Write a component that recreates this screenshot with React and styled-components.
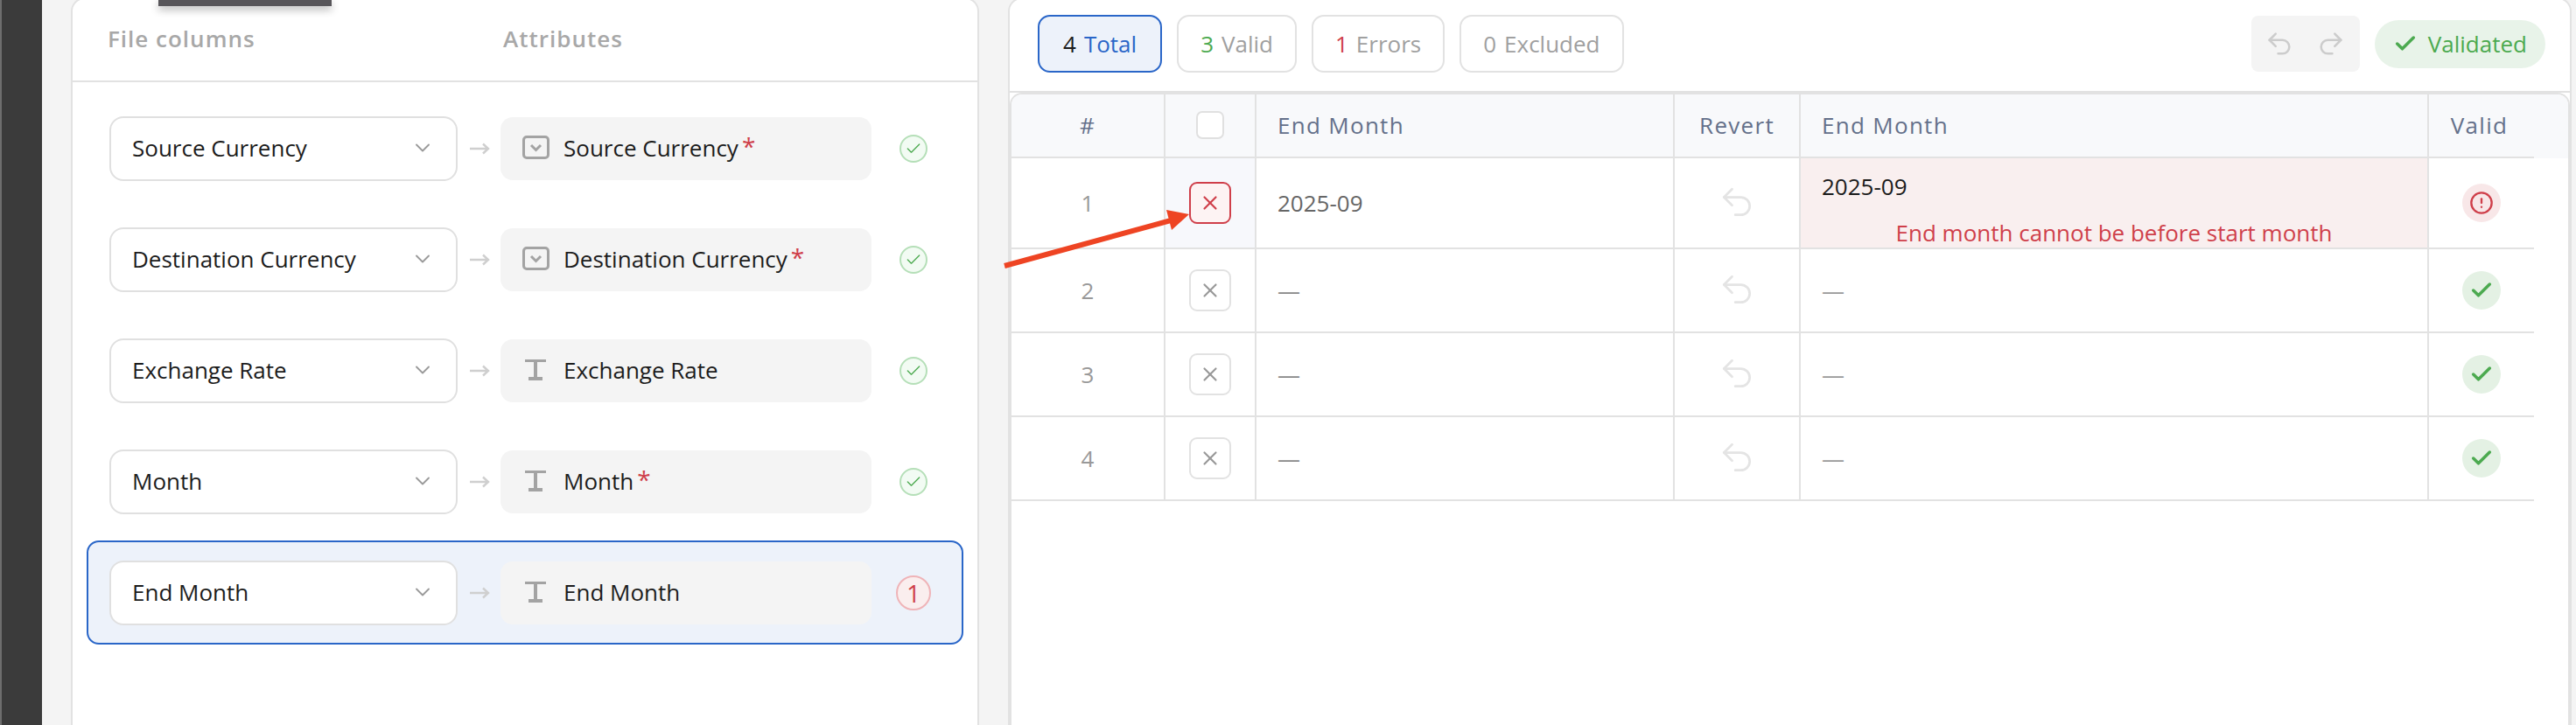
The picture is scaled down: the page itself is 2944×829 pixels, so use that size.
import React from 'react';
import styled, { createGlobalStyle } from 'styled-components';
import { ChevronDown, Redo2, Undo2, X, Check, CircleAlert } from 'lucide-react';

const GlobalStyle = createGlobalStyle`
  html, body { margin: 0; padding: 0; background: #f4f4f4; }
  body { font-family: "Open Sans", "Noto Sans", sans-serif; font-size: 26px; color: #1c1c1c; }
  * { box-sizing: border-box; }
`;

const Page = styled.div`
  position: relative;
  display: flex;
  width: 2944px;
  height: 829px;
  overflow: hidden;
`;

const Rail = styled.div`
  flex: 0 0 48px;
  background: #3b3b3b;
  border-left: 2px solid #6e6e6e;
`;

const Popover = styled.div`
  position: absolute;
  left: 181px;
  top: 0;
  width: 198px;
  height: 7px;
  background: #58565a;
  box-shadow: 0 4px 10px rgba(0, 0, 0, 0.3);
`;

const Card = styled.section`
  flex: 0 0 auto;
  width: ${(p) => p.$width}px;
  margin-left: ${(p) => p.$offset}px;
  margin-top: -3px;
  height: 840px;
  background: #fff;
  border: 2px solid #e2e2e2;
  border-radius: 16px 16px 0 0;
`;

const MapHead = styled.div`
  display: flex;
  align-items: center;
  height: 95px;
  padding-left: 40px;
  padding-bottom: 4px;
  border-bottom: 2px solid #e2e2e2;
`;

const HeadLabel = styled.div`
  width: ${(p) => p.$width}px;
  font-weight: 600;
  letter-spacing: 1px;
  color: #a8a8a8;
`;

const MapList = styled.div`
  display: flex;
  flex-direction: column;
  gap: 8px;
  padding: 16px;
`;

const MapRow = styled.div`
  display: flex;
  align-items: center;
  height: 119px;
  padding: 0 24px;
  border: 2px solid ${(p) => (p.$active ? '#2a66c8' : 'transparent')};
  border-radius: 14px;
  background: ${(p) => (p.$active ? '#edf2fa' : 'transparent')};
`;

const SelectBox = styled.div`
  display: flex;
  align-items: center;
  justify-content: space-between;
  flex: 0 0 398px;
  height: 74px;
  padding: 0 24px 2px 24px;
  background: #fff;
  border: 2px solid #e0e0e0;
  border-radius: 16px;
  color: #9a9a9a;
`;

const SelectText = styled.span`
  color: #1c1c1c;
`;

const ArrowSlot = styled.div`
  flex: 0 0 49px;
  display: flex;
  align-items: center;
  justify-content: center;
`;

const AttrBox = styled.div`
  display: flex;
  align-items: center;
  flex: 0 0 424px;
  height: 72px;
  padding: 0 0 2px 24px;
  background: #f4f4f4;
  border-radius: 14px;
`;

const AttrIcon = styled.span`
  flex: 0 0 32px;
  display: flex;
  justify-content: center;
  margin-right: 16px;
`;

const Star = styled.span`
  color: #cf3f4a;
  font-size: 28px;
  line-height: 28px;
  margin: 0 0 3px 4px;
`;

const StatusSlot = styled.div`
  flex: 0 0 40px;
  margin-left: 28px;
  display: flex;
  justify-content: center;
`;

const OkDot = styled.span`
  display: flex;
  align-items: center;
  justify-content: center;
  width: 32px;
  height: 32px;
  border-radius: 50%;
  background: #f2fbf3;
  border: 2px solid #b5dfb8;
  color: #4caa50;
`;

const CountDot = styled.span`
  display: flex;
  align-items: center;
  justify-content: center;
  width: 40px;
  height: 40px;
  border-radius: 50%;
  background: #faeeee;
  border: 2px solid #efb4b8;
  color: #cf3f4a;
  font-size: 28px;
`;

const Toolbar = styled.div`
  display: flex;
  align-items: center;
  gap: 17px;
  height: 107px;
  padding: 0 28px 3px 32px;
  border-bottom: 2px solid #e2e2e2;
`;

const Pill = styled.div`
  display: flex;
  align-items: center;
  gap: 9px;
  height: 66px;
  padding: 0 ${(p) => (p.$active ? 27 : 25)}px;
  border: 2px solid ${(p) => (p.$active ? '#2a66c8' : '#e2e2e2')};
  border-radius: 14px;
  background: ${(p) => (p.$active ? '#edf2fa' : '#fff')};
  color: ${(p) => (p.$active ? '#2a66c8' : '#a0a0a0')};
`;

const Count = styled.span`
  color: ${(p) => p.$color};
  font-weight: 500;
`;

const Spacer = styled.div`
  flex: 1;
`;

const HistoryGroup = styled.div`
  display: flex;
  align-items: center;
  justify-content: center;
  gap: 25px;
  width: 124px;
  height: 64px;
  background: #f4f4f4;
  border-radius: 8px;
  color: #cccccc;
`;

const ValidatedPill = styled.div`
  display: flex;
  align-items: center;
  gap: 12px;
  height: 55px;
  padding: 0 21px;
  border-radius: 28px;
  background: #e8f3e9;
  color: #4caa50;
`;

const TableWrap = styled.div`
  border: 2px solid #e2e2e2;
  border-bottom: none;
  border-radius: 14px 14px 0 0;
  height: 740px;
  overflow: hidden;
`;

const HeadBand = styled.div`
  background: #f8f9fb;
`;

const Grid = styled.div`
  display: grid;
  grid-template-columns: 176px 104px 478px 144px 718px 120px;
  width: 1740px;
  height: ${(p) => p.$height}px;
  border-bottom: 2px solid #e2e2e2;
`;

const Cell = styled.div`
  display: flex;
  align-items: center;
  justify-content: ${(p) => (p.$center ? 'center' : 'flex-start')};
  padding-left: ${(p) => (p.$center ? 0 : 24)}px;
  border-right: ${(p) => (p.$last ? 'none' : '2px solid #e2e2e2')};
  background: ${(p) => p.$bg || 'transparent'};
  color: ${(p) => p.$color || '#666'};
`;

const HeadCell = styled(Cell)`
  color: #64708a;
  font-weight: 500;
  letter-spacing: 1.3px;
  padding-bottom: 2px;
  padding-right: ${(p) => (p.$last ? 5 : 0)}px;
`;

const ErrorCell = styled.div`
  display: flex;
  flex-direction: column;
  justify-content: space-between;
  padding: 14px 24px 0;
  border-right: 2px solid #e2e2e2;
  background: #f9efef;
  color: #1c1c1c;
`;

const ErrorText = styled.div`
  text-align: center;
  color: #cf3f4a;
  line-height: 34px;
`;

const CheckBox = styled.span`
  width: 32px;
  height: 32px;
  background: #fff;
  border: 2px solid #e0e0e0;
  border-radius: 7px;
`;

const ExcludeBtn = styled.span`
  display: flex;
  align-items: center;
  justify-content: center;
  width: 48px;
  height: 48px;
  border-radius: 9px;
  border: 2px solid ${(p) => (p.$on ? '#cf3f4a' : '#e2e2e2')};
  background: ${(p) => (p.$on ? '#fdf3f3' : '#fff')};
  color: ${(p) => (p.$on ? '#cf3f4a' : '#999')};
`;

const RevertIcon = styled.span`
  display: flex;
  color: #e4e4e4;
  margin-bottom: 2px;
`;

const ValidDot = styled.span`
  display: flex;
  align-items: center;
  justify-content: center;
  width: 44px;
  height: 44px;
  border-radius: 50%;
  background: ${(p) => (p.$bad ? '#f8e7e8' : '#e4f1e4')};
  color: ${(p) => (p.$bad ? '#cf3f4a' : '#4caa50')};
`;

const Overlay = styled.svg`
  position: absolute;
  left: 0;
  top: 0;
  pointer-events: none;
`;

const SelectIcon = () => (
  <svg width="31" height="27" viewBox="0 0 31 27" fill="none">
    <rect x="1.5" y="1.5" width="28" height="24" rx="3.5" stroke="#a3a3a3" strokeWidth="3" />
    <path d="M10 11l5.5 5.5L21 11" stroke="#a3a3a3" strokeWidth="3" />
  </svg>
);

const TextIcon = () => (
  <svg width="24" height="24" viewBox="0 0 24 24" fill="#a3a3a3">
    <rect x="0" y="0" width="24" height="3" />
    <rect x="10" y="3" width="4" height="18" />
    <rect x="4" y="20" width="16" height="4" />
  </svg>
);

const ArrowRight = () => (
  <svg width="24" height="14" viewBox="0 0 24 14" fill="none" stroke="#cfcfcf" strokeWidth="2.4">
    <path d="M1 7h21M16 1.5L22 7l-6 5.5" />
  </svg>
);

const mappings = [
  { column: 'Source Currency', attr: 'Source Currency', icon: 'select', required: true },
  { column: 'Destination Currency', attr: 'Destination Currency', icon: 'select', required: true },
  { column: 'Exchange Rate', attr: 'Exchange Rate', icon: 'text' },
  { column: 'Month', attr: 'Month', icon: 'text', required: true },
  { column: 'End Month', attr: 'End Month', icon: 'text', errors: 1 },
];

const filters = [
  { count: 4, label: 'Total', color: '#1c1c1c', active: true },
  { count: 3, label: 'Valid', color: '#4caa50' },
  { count: 1, label: 'Errors', color: '#cf3f4a' },
  { count: 0, label: 'Excluded', color: '#a0a0a0' },
];

export default function App() {
  return (
    <>
      <GlobalStyle />
      <Page>
        <Rail />
        <Card $width={1038} $offset={33}>
          <MapHead>
            <HeadLabel $width={452}>File columns</HeadLabel>
            <HeadLabel>Attributes</HeadLabel>
          </MapHead>
          <MapList>
            {mappings.map((m) => (
              <MapRow key={m.column} $active={!!m.errors}>
                <SelectBox>
                  <SelectText>{m.column}</SelectText>
                  <ChevronDown size={28} strokeWidth={1.6} />
                </SelectBox>
                <ArrowSlot>
                  <ArrowRight />
                </ArrowSlot>
                <AttrBox>
                  <AttrIcon>{m.icon === 'select' ? <SelectIcon /> : <TextIcon />}</AttrIcon>
                  {m.attr}
                  {m.required && <Star>*</Star>}
                </AttrBox>
                <StatusSlot>
                  {m.errors ? (
                    <CountDot>{m.errors}</CountDot>
                  ) : (
                    <OkDot>
                      <Check size={20} strokeWidth={1.6} />
                    </OkDot>
                  )}
                </StatusSlot>
              </MapRow>
            ))}
          </MapList>
        </Card>
        <Card $width={1787} $offset={33}>
          <Toolbar>
            {filters.map((f) => (
              <Pill key={f.label} $active={f.active}>
                <Count $color={f.color}>{f.count}</Count>
                {f.label}
              </Pill>
            ))}
            <Spacer />
            <HistoryGroup>
              <Undo2 size={34} strokeWidth={1.8} />
              <Redo2 size={34} strokeWidth={1.8} />
            </HistoryGroup>
            <ValidatedPill>
              <Check size={28} strokeWidth={3} />
              Validated
            </ValidatedPill>
          </Toolbar>
          <TableWrap>
            <HeadBand>
              <Grid $height={73}>
                <HeadCell $center>#</HeadCell>
                <HeadCell $center>
                  <CheckBox />
                </HeadCell>
                <HeadCell>End Month</HeadCell>
                <HeadCell $center>Revert</HeadCell>
                <HeadCell>End Month</HeadCell>
                <HeadCell $center $last>Valid</HeadCell>
              </Grid>
            </HeadBand>
            <Grid $height={104}>
              <Cell $center $color="#999">1</Cell>
              <Cell $center $bg="#f7f8fc">
                <ExcludeBtn $on>
                  <X size={26} strokeWidth={2} />
                </ExcludeBtn>
              </Cell>
              <Cell>2025-09</Cell>
              <Cell $center>
                <RevertIcon>
                  <Undo2 size={44} strokeWidth={1.5} />
                </RevertIcon>
              </Cell>
              <ErrorCell>
                <div>2025-09</div>
                <ErrorText>End month cannot be before start month</ErrorText>
              </ErrorCell>
              <Cell $center $last>
                <ValidDot $bad>
                  <CircleAlert size={28} strokeWidth={2} />
                </ValidDot>
              </Cell>
            </Grid>
            {[2, 3, 4].map((n) => (
              <Grid key={n} $height={96}>
                <Cell $center $color="#999">{n}</Cell>
                <Cell $center>
                  <ExcludeBtn>
                    <X size={26} strokeWidth={2} />
                  </ExcludeBtn>
                </Cell>
                <Cell $color="#888">—</Cell>
                <Cell $center>
                  <RevertIcon>
                    <Undo2 size={44} strokeWidth={1.5} />
                  </RevertIcon>
                </Cell>
                <Cell $color="#999">—</Cell>
                <Cell $center $last>
                  <ValidDot>
                    <Check size={28} strokeWidth={3} />
                  </ValidDot>
                </Cell>
              </Grid>
            ))}
          </TableWrap>
        </Card>
        <Popover />
        <Overlay width="2944" height="829" viewBox="0 0 2944 829">
          <path d="M1148 304L1342 251" stroke="#ee4423" strokeWidth="6" fill="none" />
          <path d="M1359 245L1333 240L1339 263Z" fill="#ee4423" />
        </Overlay>
      </Page>
    </>
  );
}
